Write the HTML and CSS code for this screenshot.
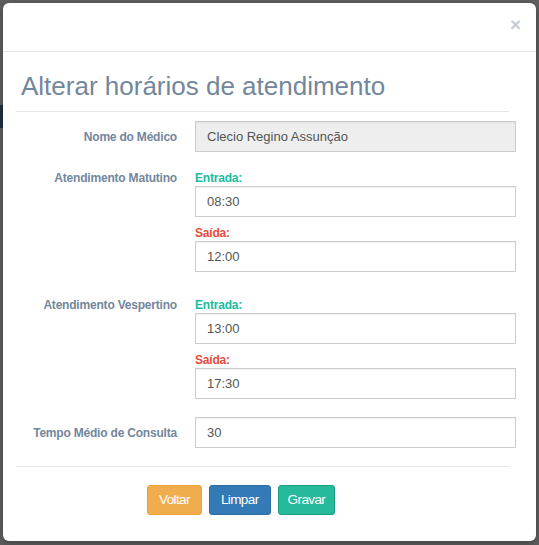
FILE: index.html
```html
<!DOCTYPE html>
<html lang="pt-BR">
<head>
<meta charset="utf-8">
<title>Alterar horários de atendimento</title>
<link rel="stylesheet" href="styles.css">
</head>
<body>
<div class="backdrop-bar"></div>
<div class="modal">
  <div class="modal-header">
    <button class="close" type="button">×</button>
  </div>
  <div class="modal-body">
    <h3 class="title">Alterar horários de atendimento</h3>
    <div class="divider"></div>
    <form class="form">
      <div class="row row-name">
        <label class="row-label row-label-mid">Nome do Médico</label>
        <input class="field field-disabled" type="text" value="Clecio Regino Assunção" readonly>
      </div>
      <div class="row row-group">
        <label class="row-label">Atendimento Matutino</label>
        <div class="group">
          <span class="sub-label in">Entrada:</span>
          <input class="field" type="text" value="08:30">
          <span class="sub-label out">Saída:</span>
          <input class="field" type="text" value="12:00">
        </div>
      </div>
      <div class="row row-group row-group-second">
        <label class="row-label">Atendimento Vespertino</label>
        <div class="group">
          <span class="sub-label in">Entrada:</span>
          <input class="field" type="text" value="13:00">
          <span class="sub-label out">Saída:</span>
          <input class="field" type="text" value="17:30">
        </div>
      </div>
      <div class="row row-time">
        <label class="row-label row-label-mid">Tempo Médio de Consulta</label>
        <input class="field" type="text" value="30">
      </div>
    </form>
    <div class="divider divider-footer"></div>
    <div class="actions">
      <button class="btn btn-warning" type="button">Voltar</button>
      <button class="btn btn-primary" type="button">Limpar</button>
      <button class="btn btn-success btn-narrow" type="button">Gravar</button>
    </div>
  </div>
</div>
</body>
</html>
```
FILE: styles.css
```css
* { box-sizing: border-box; }

html, body {
  margin: 0;
  padding: 0;
}

body {
  width: 539px;
  height: 545px;
  overflow: hidden;
  background: #5f5f5f;
  font-family: "Liberation Sans", Arial, sans-serif;
  position: relative;
}

.backdrop-bar {
  position: absolute;
  left: 0;
  top: 105px;
  width: 3px;
  height: 23px;
  background: #1f3043;
}

.modal {
  position: relative;
  margin: 3px 0 0 3px;
  width: 533px;
  height: 538px;
  background: #fff;
  border-radius: 6px;
  box-shadow: 0 3px 9px rgba(0, 0, 0, 0.3);
}

.modal-header {
  height: 49px;
  border-bottom: 1px solid #e5e5e5;
  display: flex;
  justify-content: flex-end;
  align-items: flex-start;
  padding: 12px 15px 0 0;
}

.close {
  border: 0;
  background: none;
  padding: 0;
  margin: 0;
  font-family: "Liberation Sans", Arial, sans-serif;
  font-size: 19px;
  font-weight: bold;
  line-height: 1;
  color: #c6ccd4;
}

.modal-body {
  padding: 0;
}

.title {
  margin: 19px 0 0 18px;
  font-size: 26px;
  line-height: 30px;
  font-weight: 400;
  color: #73879c;
}

.divider {
  margin: 10px 27px 0 13px;
  height: 1px;
  background: #e5e5e5;
}

.form {
  margin-top: 9px;
}

.row {
  display: grid;
  grid-template-columns: 174px 321px;
  column-gap: 18px;
}

.row-group { margin-top: 17px; }
.row-group-second { margin-top: 25px; }
.row-time { margin-top: 18px; }

.row-label {
  text-align: right;
  font-size: 12px;
  font-weight: bold;
  letter-spacing: -0.2px;
  line-height: 16px;
  color: #73879c;
}

.row-label-mid {
  line-height: 31px;
  padding-top: 1px;
}

.group {
  display: flex;
  flex-direction: column;
}

.sub-label {
  font-size: 12px;
  font-weight: bold;
  letter-spacing: -0.2px;
  line-height: 16px;
}

.sub-label.out { margin-top: 8px; }
.sub-label.in { color: #1abb9c; }
.sub-label.out { color: #e74c3c; }

.field {
  display: block;
  width: 321px;
  height: 31px;
  margin: 0;
  padding: 0 11px;
  border: 1px solid #cccccc;
  border-radius: 0;
  background: #fff;
  font-family: "Liberation Sans", Arial, sans-serif;
  font-size: 13px;
  color: #555555;
  box-shadow: inset 0 1px 1px rgba(0, 0, 0, 0.06);
  outline: none;
}

.field-disabled {
  background: #eeeeee;
}

.divider-footer {
  margin-top: 17px;
}

.actions {
  display: flex;
  gap: 7px;
  margin: 18px 0 0 144px;
}

.btn {
  height: 30px;
  padding: 0 11px;
  border: 1px solid transparent;
  border-radius: 3px;
  font-family: "Liberation Sans", Arial, sans-serif;
  font-size: 13.5px;
  letter-spacing: -0.6px;
  color: #fff;
  line-height: 28px;
}

.btn-narrow { padding: 0 9px; }

.btn-warning { background: #f0ad4e; border-color: #eea236; }
.btn-primary { background: #337ab7; border-color: #2e6da4; }
.btn-success { background: #26b99a; border-color: #169f85; }
```
